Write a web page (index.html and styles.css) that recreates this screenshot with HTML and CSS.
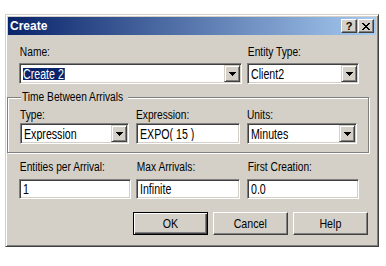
FILE: index.html
```html
<!DOCTYPE html>
<html>
<head>
<meta charset="utf-8">
<link rel="stylesheet" href="styles.css">
</head>
<body>
<div class="window">
  <div class="titlebar">
    <span class="title">Create</span>
    <div class="tbtns">
      <span class="tbtn help">?</span>
      <span class="tbtn close"><svg width="8" height="7" viewBox="0 0 8 7"><path d="M0 0h2v1H0zM6 0h2v1H6zM1 1h2v1H1zM5 1h2v1H5zM2 2h4v1H2zM3 3h2v1H3zM2 4h4v1H2zM1 5h2v1H1zM5 5h2v1H5zM0 6h2v1H0zM6 6h2v1H6z" fill="#000"/></svg></span>
    </div>
  </div>

  <div class="row top">
    <div class="cell c-name">
      <div class="lbl">Name:</div>
      <div class="sunken combo w-name"><span class="val"><span class="t sel">Create 2</span></span><span class="drop"><svg width="7" height="4" viewBox="0 0 7 4"><path d="M0 0h7v1H0zM1 1h5v1H1zM2 2h3v1H2zM3 3h1v1H3z" fill="#000"/></svg></span></div>
    </div>
    <div class="cell">
      <div class="lbl">Entity Type:</div>
      <div class="sunken combo w-col3"><span class="val"><span class="t">Client2</span></span><span class="drop"><svg width="7" height="4" viewBox="0 0 7 4"><path d="M0 0h7v1H0zM1 1h5v1H1zM2 2h3v1H2zM3 3h1v1H3z" fill="#000"/></svg></span></div>
    </div>
  </div>

  <fieldset class="group">
    <legend><span class="lt">Time Between Arrivals</span></legend>
    <div class="row inner">
      <div class="cell c-type">
        <div class="lbl">Type:</div>
        <div class="sunken combo w-type"><span class="val"><span class="t">Expression</span></span><span class="drop"><svg width="7" height="4" viewBox="0 0 7 4"><path d="M0 0h7v1H0zM1 1h5v1H1zM2 2h3v1H2zM3 3h1v1H3z" fill="#000"/></svg></span></div>
      </div>
      <div class="cell c-expr">
        <div class="lbl">Expression:</div>
        <div class="sunken combo w-expr"><span class="val"><span class="t">EXPO( 15 )</span></span></div>
      </div>
      <div class="cell">
        <div class="lbl">Units:</div>
        <div class="sunken combo w-units"><span class="val"><span class="t">Minutes</span></span><span class="drop"><svg width="7" height="4" viewBox="0 0 7 4"><path d="M0 0h7v1H0zM1 1h5v1H1zM2 2h3v1H2zM3 3h1v1H3z" fill="#000"/></svg></span></div>
      </div>
    </div>
  </fieldset>

  <div class="row bottom">
    <div class="cell c-ent">
      <div class="lbl">Entities per Arrival:</div>
      <div class="sunken edit w-ent"><span class="val"><span class="t">1</span></span></div>
    </div>
    <div class="cell c-max">
      <div class="lbl">Max Arrivals:</div>
      <div class="sunken edit w-max"><span class="val"><span class="t">Infinite</span></span></div>
    </div>
    <div class="cell">
      <div class="lbl">First Creation:</div>
      <div class="sunken edit w-col3"><span class="val"><span class="t">0.0</span></span></div>
    </div>
  </div>

  <div class="buttons">
    <button class="btn default"><span class="bt">OK</span></button>
    <button class="btn"><span class="bt">Cancel</span></button>
    <button class="btn"><span class="bt">Help</span></button>
  </div>
</div>
</body>
</html>
```

FILE: styles.css
```css
html, body {
  margin: 0;
  padding: 0;
  background: #fff;
}

body {
  font-family: "Liberation Sans", Arial, sans-serif;
  color: #000;
}

.window {
  box-sizing: border-box;
  width: 374px;
  height: 233px;
  margin: 14px 0 0 5px;
  padding: 1px;
  background: #d4d0c8;
  border: 1px solid;
  border-color: #d4d0c8 #404040 #404040 #d4d0c8;
  box-shadow: inset 1px 1px 0 #fff, inset -1px -1px 0 #808080;
}

.titlebar {
  height: 18px;
  margin: 1px 0 0 1px;
  width: 368px;
  display: flex;
  align-items: center;
  justify-content: space-between;
  background: linear-gradient(to right, #0a246a 0%, #a6caf0 100%);
  padding: 0 2px;
  box-sizing: border-box;
}

.title {
  font-weight: bold;
  font-size: 12px;
  color: #fff;
  line-height: 14px;
}

.tbtns {
  display: flex;
  gap: 1px;
}

.tbtn {
  box-sizing: border-box;
  width: 16px;
  height: 14px;
  display: flex;
  align-items: center;
  justify-content: center;
  background: #d4d0c8;
  border: 1px solid;
  border-color: #fff #404040 #404040 #fff;
  box-shadow: inset -1px -1px 0 #808080;
  font-weight: bold;
  font-size: 11px;
  line-height: 11px;
}

.tbtn svg { display: block; }

.row {
  display: flex;
}

.row.top {
  padding-left: 12px;
  margin-top: 10px;
}

.cell {
  display: flex;
  flex-direction: column;
}

.lbl {
  font-size: 12px;
  line-height: 14px;
  height: 14px;
  padding-left: 1px;
  margin-bottom: 4px;
  white-space: nowrap;
  transform: scaleX(0.85);
  transform-origin: left center;
}

.c-name { width: 228px; }
.w-name { width: 223px; }
.w-col3 { width: 112px; }

.sunken {
  box-sizing: border-box;
  background: #fff;
  border: 1px solid;
  border-color: #808080 #fff #fff #808080;
  box-shadow: inset 1px 1px 0 #404040, inset -1px -1px 0 #d4d0c8;
  padding: 2px;
  display: flex;
  align-items: center;
  font-size: 14px;
}

.combo { height: 21px; }
.edit { height: 20px; }

.val {
  flex: 1;
  padding-left: 1px;
  line-height: 14px;
  white-space: nowrap;
  overflow: hidden;
}

.t {
  display: inline-block;
  transform: scaleX(0.76);
  transform-origin: left center;
}

.sel {
  background: #0a246a;
  color: #fff;
  line-height: 12px;
  height: 12px;
  padding-right: 1px;
}

.drop {
  box-sizing: border-box;
  width: 16px;
  height: 17px;
  margin-right: -1px;
  display: flex;
  align-items: center;
  justify-content: center;
  background: #d4d0c8;
  border: 1px solid;
  border-color: #d4d0c8 #404040 #404040 #d4d0c8;
  box-shadow: inset 1px 1px 0 #fff, inset -1px -1px 0 #808080;
}

.drop svg { display: block; }

.group {
  box-sizing: border-box;
  width: 362px;
  margin: 6px 0 0 0;
  padding: 4px 0 8px 12px;
  border: 1px solid #808080;
  box-shadow: inset 1px 1px 0 #fff, 1px 1px 0 #fff;
  min-width: 0;
}

.group legend {
  width: 104px;
  font-size: 12px;
  line-height: 14px;
  padding: 0 2px 0 1px;
  margin-left: 1px;
  background: #d4d0c8;
  white-space: nowrap;
}

.lt {
  display: inline-block;
  transform: scaleX(0.85);
  transform-origin: left center;
}

.group .lbl {
  padding-left: 0;
  margin-bottom: 1px;
}

.c-type { width: 116px; }
.w-type { width: 109px; }
.c-expr { width: 111px; }
.w-expr { width: 104px; }
.w-units { width: 110px; }

.row.bottom {
  padding-left: 12px;
  margin-top: 7px;
}

.row.bottom .lbl { margin-bottom: 5px; }

.c-ent { width: 117px; }
.w-ent { width: 112px; }
.c-max { width: 111px; }
.w-max { width: 104px; }

.buttons {
  display: flex;
  justify-content: flex-end;
  gap: 5px;
  margin-top: 13px;
  padding-right: 9px;
}

.btn {
  box-sizing: border-box;
  width: 75px;
  height: 23px;
  margin: 0;
  padding: 0;
  background: #d4d0c8;
  border: 1px solid;
  border-color: #fff #404040 #404040 #fff;
  box-shadow: inset -1px -1px 0 #808080;
  font-family: "Liberation Sans", Arial, sans-serif;
  font-size: 13px;
  color: #000;
}

.bt {
  display: inline-block;
  transform: scaleX(0.82);
}

.btn.default {
  border: 1px solid #000;
  box-shadow: inset 1px 1px 0 #fff, inset -1px -1px 0 #404040, inset -2px -2px 0 #808080;
}
```
